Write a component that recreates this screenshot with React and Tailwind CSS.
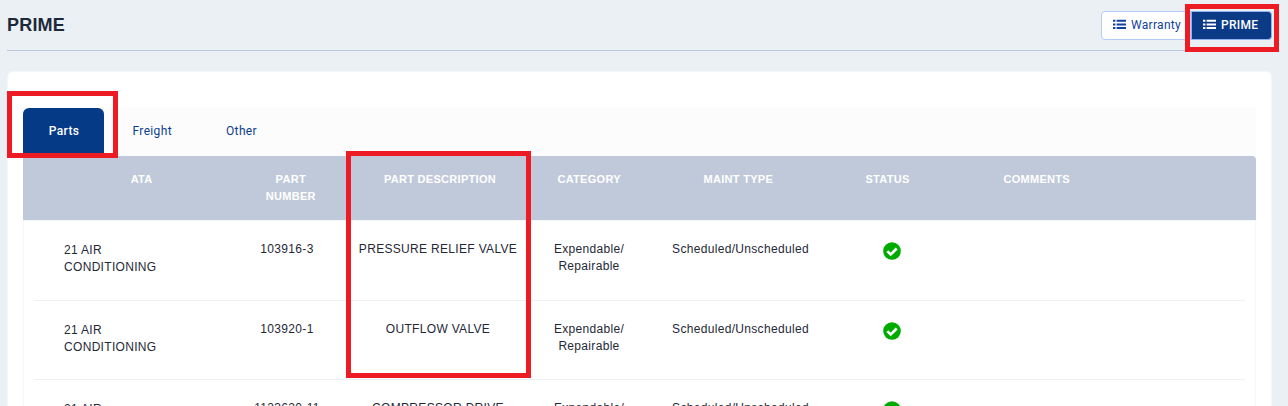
const headers = [
  "ATA",
  "PART NUMBER",
  "PART DESCRIPTION",
  "CATEGORY",
  "MAINT TYPE",
  "STATUS",
  "COMMENTS",
];

const rows = [
  { number: "103916-3", description: "PRESSURE RELIEF VALVE", height: "h-20" },
  { number: "103920-1", description: "OUTFLOW VALVE", height: "h-[79px]" },
  { number: "1123620-11", description: "COMPRESSOR DRIVE", height: "h-20" },
];

function ListIcon() {
  return (
    <svg className="h-[11px] w-[13px] shrink-0" viewBox="0 0 13 11" fill="currentColor">
      <path d="M0 .8h2.4v2H0zM0 4.4h2.4v2H0zM0 8h2.4v2H0zM3.6 .8H13v2H3.6zM3.6 4.4H13v2H3.6zM3.6 8H13v2H3.6z" />
    </svg>
  );
}

function CheckCircle() {
  return (
    <svg className="mx-auto size-[18px]" viewBox="0 0 18 18">
      <circle cx="9" cy="9" r="8.8" fill="#00ab00" />
      <path d="M4.3 9.1l3.4 3.3 6-5.9" fill="none" stroke="#fff" strokeWidth="2.7" />
    </svg>
  );
}

function TopBar() {
  return (
    <header className="ml-[7px] mr-4 flex h-[51px] items-start justify-between border-b border-[#bcc8dd]">
      <h1 className="mt-[11px] font-['Liberation_Sans',sans-serif] text-[18px] leading-7 font-bold tracking-[0.2px] text-[#1d2939]">
        PRIME
      </h1>
      <div className="mt-[11px] flex h-[29px] font-['Roboto',sans-serif] text-[12px] tracking-[0.3px]">
        <button className="flex w-[90px] items-center gap-[5px] rounded-l border border-[#b3cbf5] bg-white pb-0.5 pl-[11px] text-[#0f439b]">
          <ListIcon />
          Warranty
        </button>
        <button className="flex w-[81px] items-center gap-[5px] rounded-r border border-[#8fb2ee] bg-[#0b3b86] pb-0.5 pl-[11px] font-medium text-white">
          <ListIcon />
          <span>PRIME</span>
        </button>
      </div>
    </header>
  );
}

function Tabs() {
  return (
    <nav className="flex h-[49px] bg-[#fcfcfc] font-['Roboto',sans-serif] text-[12px] leading-[46px] tracking-[0.35px] text-[#0b3f8c]">
      <span className="mt-px h-12 w-[81px] rounded-t-md bg-[#053a87] pt-px pl-px text-center leading-[45px] font-medium text-white">
        Parts
      </span>
      <span className="ml-[28.5px] w-[93.5px] pt-px">Freight</span>
      <span className="pt-px">Other</span>
    </nav>
  );
}

function Table() {
  return (
    <div className="font-['Liberation_Sans',sans-serif]">
      <div className="grid h-16 grid-cols-[repeat(7,149.2px)] rounded-tr bg-[#c0c9da] pt-[15px] pl-[44px] text-center text-[11px] leading-[17px] font-bold tracking-[0.3px] text-white">
        {headers.map((h) => (
          <div key={h} className="whitespace-nowrap">
            {h === "PART NUMBER" ? (
              <>
                PART
                <br />
                NUMBER
              </>
            ) : (
              h
            )}
          </div>
        ))}
      </div>
      <div className="h-[260px] border-x border-t border-[#f5f6f8] px-2.5 text-[12px] leading-[17px] tracking-[0.32px] text-[#1f2937]">
        {rows.map((r) => (
          <div
            key={r.number}
            className={`grid grid-cols-[147px_repeat(5,151px)] border-b border-[#eff1f5] pt-5 pl-[30.5px] text-center whitespace-nowrap ${r.height}`}
          >
            <div className="-ml-[0.5px] pt-px text-left">
              21 AIR
              <br />
              CONDITIONING
            </div>
            <div>{r.number}</div>
            <div className="-mx-2">{r.description}</div>
            <div>
              Expendable/
              <br />
              Repairable
            </div>
            <div className="pl-px">Scheduled/Unscheduled</div>
            <div className="pt-px pl-px">
              <CheckCircle />
            </div>
          </div>
        ))}
      </div>
    </div>
  );
}

export default function App() {
  return (
    <div className="relative h-[406px] w-[1288px] overflow-hidden bg-[#ebf0f4]">
      <TopBar />
      <main className="mt-5 mr-4 ml-[7px] h-[360px] rounded-md border border-[#f4f7fa] bg-white px-[15px] pt-[35px]">
        <Tabs />
        <Table />
      </main>
      <div className="absolute top-1 left-[1185px] h-12 w-[94px] border-5 border-[#ed1c24]" />
      <div className="absolute top-[91px] left-[7px] h-[67px] w-[111px] border-5 border-[#ed1c24]" />
      <div className="absolute top-[151px] left-[346px] h-[227px] w-[185px] border-5 border-[#ed1c24]" />
    </div>
  );
}
